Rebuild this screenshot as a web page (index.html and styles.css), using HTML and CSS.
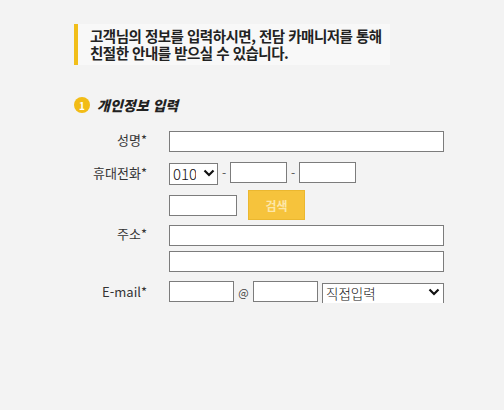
FILE: index.html
```html
<!DOCTYPE html>
<html lang="ko">
<head>
  <meta charset="UTF-8">
  <title>개인정보 입력</title>
  <link rel="stylesheet" href="styles.css">
</head>
<body>
  <div class="wrap">
    <div class="notice">
      고객님의 정보를 입력하시면, 전담 카매니저를 통해<br>
      친절한 안내를 받으실 수 있습니다.
    </div>

    <h2 class="step"><span class="num">1</span>개인정보 입력</h2>

    <form class="form">
      <div class="row r1">
        <label class="lbl">성명*</label>
        <input class="txt full" type="text">
      </div>
      <div class="row r2">
        <label class="lbl">휴대전화*</label>
        <div class="sel sel-phone">
          <select><option>010</option><option>011</option></select>
          <svg class="chev" viewBox="0 0 12 8"><path d="M1.5 1.5 6 6l4.5-4.5" fill="none" stroke="#111" stroke-width="2.2"/></svg>
        </div>
        <span class="dash">-</span>
        <input class="txt phone" type="text">
        <span class="dash">-</span>
        <input class="txt phone" type="text">
      </div>
      <div class="row r3">
        <span class="lbl"></span>
        <input class="txt zip" type="text">
        <button type="button" class="btn">검색</button>
      </div>
      <div class="row r4">
        <label class="lbl">주소*</label>
        <input class="txt full" type="text">
      </div>
      <div class="row r5">
        <span class="lbl"></span>
        <input class="txt full" type="text">
      </div>
      <div class="row r6">
        <label class="lbl">E-mail*</label>
        <input class="txt mail" type="text">
        <span class="at">@</span>
        <input class="txt mail" type="text">
        <div class="sel sel-mail">
          <select><option>직접입력</option><option>naver.com</option></select>
          <svg class="chev" viewBox="0 0 12 8"><path d="M1.5 1.5 6 6l4.5-4.5" fill="none" stroke="#111" stroke-width="2.2"/></svg>
        </div>
      </div>
    </form>
  </div>
</body>
</html>
```

FILE: styles.css
```css
* { box-sizing: border-box; }
body { margin: 0; background: #f3f3f3; font-family: "Noto Sans CJK KR", "Noto Sans", sans-serif; color: #333; }
.wrap { padding: 24px 0 0 74px; }

.notice { width: 316px; height: 41px; padding: 3px 0 0 12px; background: #f8f8f8; border-left: 4px solid #f1be1a; font-size: 14.5px; font-weight: bold; line-height: 17px; color: #222; letter-spacing: -0.5px; white-space: nowrap; }

.step { display: flex; align-items: center; margin: 32px 0 0; font-size: 14px; font-style: italic; font-weight: 900; color: #222; height: 16px; }
.step .num { width: 16px; height: 16px; border-radius: 50%; background: #f2bc16; color: #fff; font-size: 10px; font-style: normal; font-weight: bold; display: flex; align-items: center; justify-content: center; margin-right: 7px; }

.form { margin-top: 18px; width: 370px; }
.row { display: flex; align-items: center; }
.r2 { margin-top: 9px; }
.r3 { margin-top: 7px; }
.r4 { margin-top: 5px; }
.r5 { margin-top: 5px; }
.r6 { margin-top: 8px; }
.lbl { width: 73px; margin-right: 22px; text-align: right; font-size: 13px; color: #333; flex: none; }
.r1 .lbl, .r4 .lbl { align-self: flex-start; margin-top: -1px; }

.txt { height: 21px; border: 1px solid #7c7c7c; background: #fff; padding: 0 4px; font-size: 13px; outline: none; }
.full { width: 275px; }
.phone { width: 57px; }
.zip { width: 68px; }
.mail { width: 65px; }

.dash { text-align: center; font-size: 12px; color: #555; width: 12px; }
.at { width: 19px; text-align: center; font-size: 11px; color: #444; }

.sel { position: relative; height: 22px; }
.sel select { appearance: none; -webkit-appearance: none; width: 100%; height: 100%; border: 1px solid #7c7c7c; background: #fff; font-family: "Noto Sans CJK KR", "Noto Sans", sans-serif; font-size: 15px; color: #111; padding: 0 0 0 3px; line-height: 20px; border-radius: 0; outline: none; }
.sel .chev { position: absolute; top: 7px; right: 4px; width: 12px; height: 8px; pointer-events: none; }
.sel-phone { width: 49px; }
.sel-phone select { padding-right: 21px; font-weight: 300; }
.sel-phone .chev { right: 3px; top: 8px; }
.sel-mail { width: 122px; height: 23px; margin-left: 4px; }
.sel-mail .chev { right: 4px; top: 8px; }
.sel-mail select { font-size: 13.5px; line-height: 19px; padding: 0 0 1px 3px; font-weight: 300; }

.btn { width: 57px; height: 30px; margin-left: 11px; background: #f6c33c; border: 1px solid #ebb72f; color: #fde7a8; font-family: "Noto Sans CJK KR", "Noto Sans", sans-serif; font-size: 12px; font-weight: bold; }
```
